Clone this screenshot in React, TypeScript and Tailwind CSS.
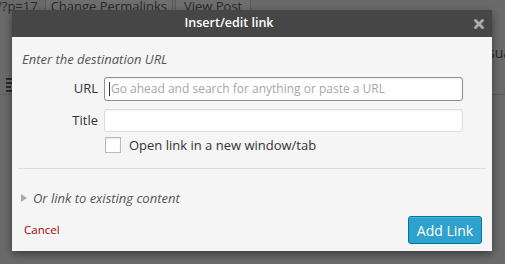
import { X } from "lucide-react";

export default function App() {
  return (
    <div className="relative w-[505px] h-[264px] overflow-hidden bg-[#6a6a6a] font-['Open_Sans',sans-serif]">
      {/* Dimmed page behind the modal */}
      <div className="flex items-end h-[13px] text-[13px] text-[#2a2a2a] leading-none">
        <span className="-ml-[3px]">/?p=17</span>
        <div className="ml-[7px] h-full border-x border-[#5a5a5a] bg-[#6e6e6e] px-[5px] flex items-end">
          Change Permalinks
        </div>
        <div className="ml-[2px] h-full border-x border-[#5a5a5a] bg-[#6e6e6e] px-[8px] flex items-end">
          View Post
        </div>
      </div>
      <div className="flex justify-end mt-[33px] text-[14px] text-[#2a2a2a] leading-none">
        <span className="-mr-[6px]">sua</span>
      </div>
      <div className="mt-[18px] ml-[6px] flex flex-col gap-[2px]">
        <span className="block w-[6px] h-[2px] bg-[#2a2a2a]" />
        <span className="block w-[7px] h-[2px] bg-[#2a2a2a]" />
        <span className="block w-[5px] h-[2px] bg-[#2a2a2a]" />
        <span className="block w-[7px] h-[2px] bg-[#2a2a2a]" />
      </div>
      <div className="mt-[2px] h-px bg-[#5c5c5c]" />

      {/* Modal */}
      <div className="absolute left-[12px] top-[10px] w-[480px] h-[241px] flex flex-col shadow-[0_3px_8px_rgba(0,0,0,0.45)]">
        <div className="relative h-[27px] bg-[#464646] flex items-center justify-center pr-[46px] text-white text-[12.5px] font-semibold">
          Insert/edit link
          <X className="absolute right-[6px] top-[7px] w-[14px] h-[14px] text-[#aaaaaa]" strokeWidth={5} />
        </div>
        <div className="flex-1 bg-[#f5f5f5] flex flex-col">
          <div className="px-[10px] pt-[13px] text-[13px] italic text-[#555] leading-[18px]">
            Enter the destination URL
          </div>
          <div className="mt-[9px] flex items-center pl-[10px]">
            <label className="w-[76px] text-right text-[13px] text-[#333]">URL</label>
            <div className="ml-[6px] w-[359px] h-[24px] rounded-[3px] border border-[#8f8f8f] bg-white shadow-[inset_0_1px_2px_rgba(0,0,0,0.07)] flex items-center pl-[4px] text-[12px] text-[#a6a6a6]">
              <span className="w-px h-[14px] bg-[#333] mr-[1px]" />
              Go ahead and search for anything or paste a URL
            </div>
          </div>
          <div className="mt-[8px] flex items-center pl-[10px]">
            <label className="w-[76px] text-right text-[13px] text-[#333]">Title</label>
            <div className="ml-[6px] w-[359px] h-[23px] rounded-[3px] border border-[#dddddd] bg-white shadow-[inset_0_1px_2px_rgba(0,0,0,0.07)]" />
          </div>
          <div className="mt-[5px] flex items-center pl-[93px] h-[16px]">
            <span className="w-[16px] h-[16px] border border-[#bbbbbb] bg-white shadow-[inset_0_1px_2px_rgba(0,0,0,0.1)]" />
            <span className="ml-[8px] text-[13px] leading-[16px] text-[#333]">Open link in a new window/tab</span>
          </div>
          <div className="mt-[15px] mx-[6px] h-px bg-[#dddddd]" />
          <div className="mt-[20px] flex items-center pl-[9px] h-[18px] text-[13px] leading-[18px] italic text-[#555]">
            <span className="w-0 h-0 border-y-[4px] border-y-transparent border-l-[6px] border-l-[#aaaaaa]" />
            <span className="ml-[6px]">Or link to existing content</span>
          </div>
          <div className="mt-[9px] flex items-center justify-between pl-[12px] pr-[10px]">
            <span className="text-[11.5px] text-[#a00]">Cancel</span>
            <button className="w-[74px] h-[28px] rounded-[3px] border border-[#0074a2] bg-[#2ea2cc] text-white text-[14px] font-medium shadow-[inset_0_1px_0_rgba(120,200,230,0.5)]">
              Add Link
            </button>
          </div>
        </div>
      </div>
    </div>
  );
}
